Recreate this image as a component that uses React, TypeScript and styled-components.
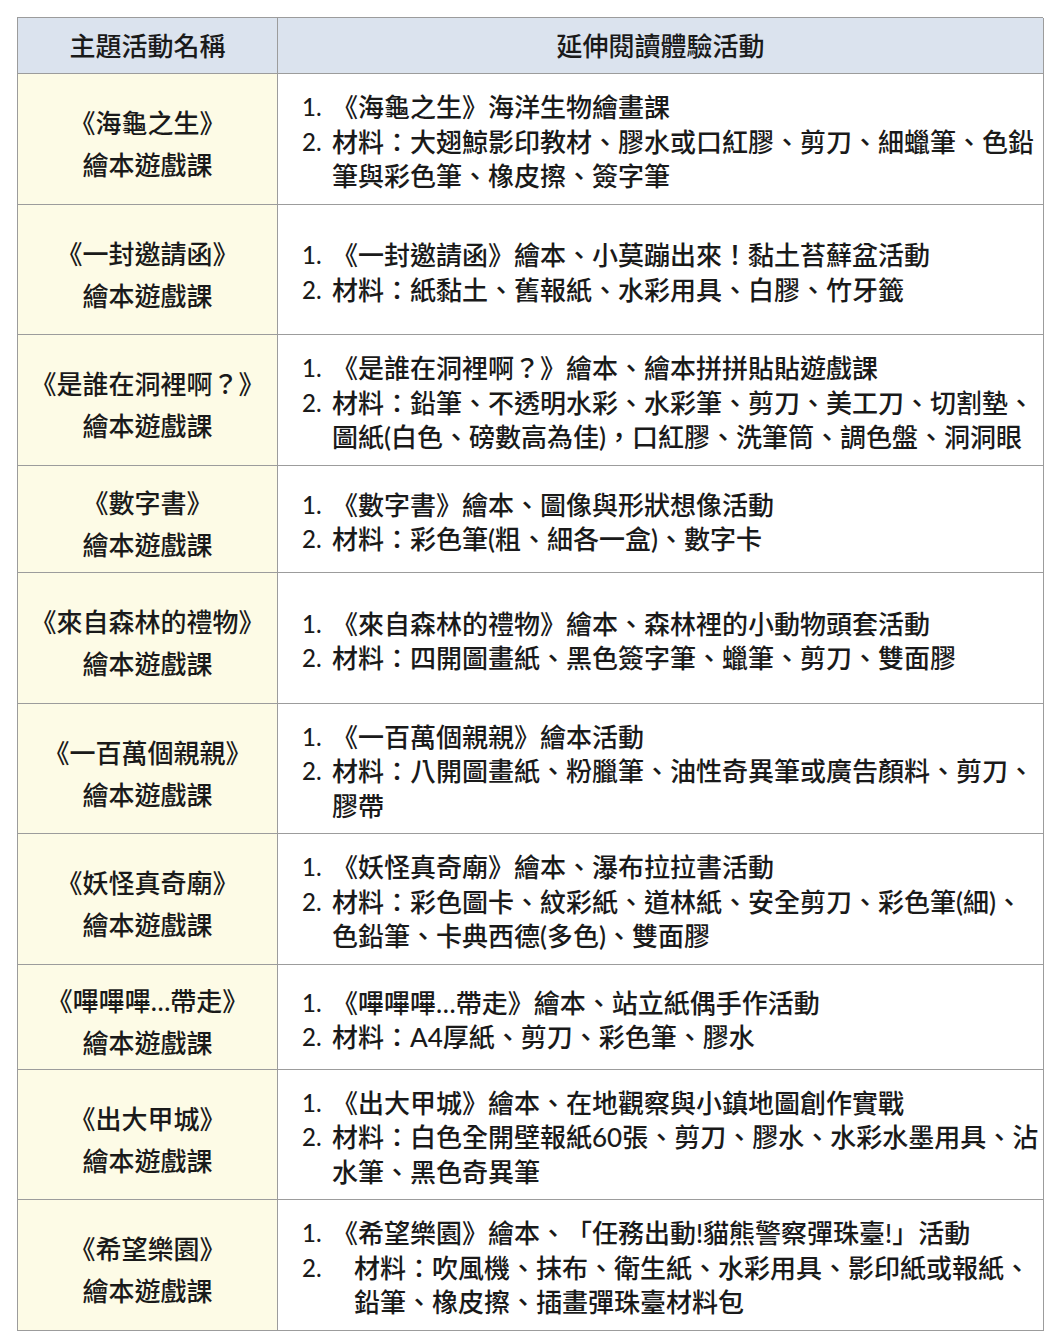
import styled, { createGlobalStyle } from 'styled-components';

const GlobalStyle = createGlobalStyle`
  html, body {
    margin: 0;
    padding: 0;
    background: #ffffff;
  }
  body {
    font-family: Lato, 'Noto Sans CJK TC', sans-serif;
    font-weight: 500;
    color: #1a1a1a;
    text-spacing-trim: space-all;
  }
`;

type Item = { text: string; indent?: number };
type Row = { title: string; height: number; items: Item[] };

const rows: Row[] = [
  {
    title: '《海龜之生》',
    height: 131,
    items: [
      { text: '《海龜之生》海洋生物繪畫課' },
      { text: '材料：大翅鯨影印教材、膠水或口紅膠、剪刀、細蠟筆、色鉛\n筆與彩色筆、橡皮擦、簽字筆' },
    ],
  },
  {
    title: '《一封邀請函》',
    height: 130,
    items: [
      { text: '《一封邀請函》繪本、小莫蹦出來！黏土苔蘚盆活動' },
      { text: '材料：紙黏土、舊報紙、水彩用具、白膠、竹牙籤' },
    ],
  },
  {
    title: '《是誰在洞裡啊？》',
    height: 131,
    items: [
      { text: '《是誰在洞裡啊？》繪本、繪本拼拼貼貼遊戲課' },
      { text: '材料：鉛筆、不透明水彩、水彩筆、剪刀、美工刀、切割墊、\n圖紙(白色、磅數高為佳)，口紅膠、洗筆筒、調色盤、洞洞眼' },
    ],
  },
  {
    title: '《數字書》',
    height: 107,
    items: [
      { text: '《數字書》繪本、圖像與形狀想像活動' },
      { text: '材料：彩色筆(粗、細各一盒)、數字卡' },
    ],
  },
  {
    title: '《來自森林的禮物》',
    height: 131,
    items: [
      { text: '《來自森林的禮物》繪本、森林裡的小動物頭套活動' },
      { text: '材料：四開圖畫紙、黑色簽字筆、蠟筆、剪刀、雙面膠' },
    ],
  },
  {
    title: '《一百萬個親親》',
    height: 130,
    items: [
      { text: '《一百萬個親親》繪本活動' },
      { text: '材料：八開圖畫紙、粉臘筆、油性奇異筆或廣告顏料、剪刀、\n膠帶' },
    ],
  },
  {
    title: '《妖怪真奇廟》',
    height: 131,
    items: [
      { text: '《妖怪真奇廟》繪本、瀑布拉拉書活動' },
      { text: '材料：彩色圖卡、紋彩紙、道林紙、安全剪刀、彩色筆(細)、\n色鉛筆、卡典西德(多色)、雙面膠' },
    ],
  },
  {
    title: '《嗶嗶嗶…帶走》',
    height: 105,
    items: [
      { text: '《嗶嗶嗶…帶走》繪本、站立紙偶手作活動' },
      { text: '材料：A4厚紙、剪刀、彩色筆、膠水' },
    ],
  },
  {
    title: '《出大甲城》',
    height: 130,
    items: [
      { text: '《出大甲城》繪本、在地觀察與小鎮地圖創作實戰' },
      { text: '材料：白色全開壁報紙60張、剪刀、膠水、水彩水墨用具、沾\n水筆、黑色奇異筆' },
    ],
  },
  {
    title: '《希望樂園》',
    height: 131,
    items: [
      { text: '《希望樂園》繪本、「任務出動!貓熊警察彈珠臺!」活動' },
      { text: '材料：吹風機、抹布、衛生紙、水彩用具、影印紙或報紙、\n鉛筆、橡皮擦、插畫彈珠臺材料包', indent: 22 },
    ],
  },
];

const App = () => {
  return (
    <Page>
      <GlobalStyle />
      <Table>
        <HeadCell>主題活動名稱</HeadCell>
        <HeadCell>延伸閱讀體驗活動</HeadCell>
        {rows.map((row) => (
          <RowGroup key={row.title}>
            <NameCell $height={row.height}>
              <span>{row.title}</span>
              <span>繪本遊戲課</span>
            </NameCell>
            <ContentCell $height={row.height}>
              {row.items.map((item, i) => (
                <ListItem key={i}>
                  <Num>{i + 1}.</Num>
                  <ItemText $indent={item.indent ?? 0}>{item.text}</ItemText>
                </ListItem>
              ))}
            </ContentCell>
          </RowGroup>
        ))}
      </Table>
    </Page>
  );
};

export default App;

const Page = styled.div`
  padding: 17px 0 0 17px;
  width: 1060px;
  box-sizing: border-box;
`;

const Table = styled.div`
  display: grid;
  grid-template-columns: 260px 766px;
  border-top: 1px solid #9c9c9c;
  border-left: 1px solid #9c9c9c;
  width: 1026px;
  box-sizing: border-box;
`;

const RowGroup = styled.div`
  display: contents;
`;

const Cell = styled.div`
  box-sizing: border-box;
  border-right: 1px solid #9c9c9c;
  border-bottom: 1px solid #9c9c9c;
  font-size: 26px;
`;

const HeadCell = styled(Cell)`
  height: 56px;
  background: #dbe3ee;
  display: flex;
  align-items: center;
  justify-content: center;
  padding-bottom: 2px;
`;

const NameCell = styled(Cell)<{ $height: number }>`
  height: ${(p) => p.$height}px;
  background: #fdfbe6;
  display: flex;
  flex-direction: column;
  align-items: center;
  justify-content: center;
  line-height: 42px;
  padding-top: 10px;
`;

const ContentCell = styled(Cell)<{ $height: number }>`
  height: ${(p) => p.$height}px;
  display: flex;
  flex-direction: column;
  justify-content: center;
  padding: 6px 0 0 24px;
  line-height: 34.5px;
`;

const ListItem = styled.div`
  display: flex;
`;

const Num = styled.span`
  width: 30px;
  flex-shrink: 0;
  font-size: 24px;
`;

const ItemText = styled.span<{ $indent: number }>`
  white-space: pre;
  padding-left: ${(p) => p.$indent}px;
`;
